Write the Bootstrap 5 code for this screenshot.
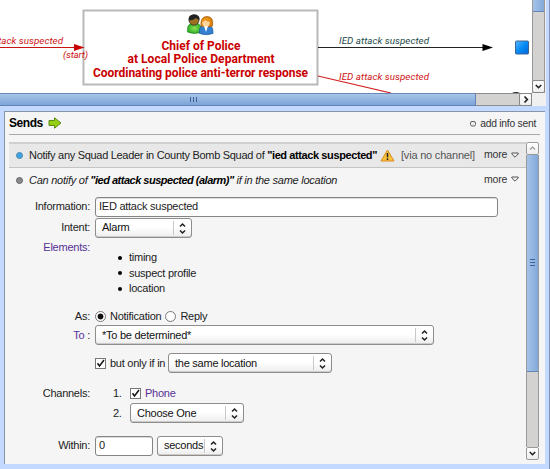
<!DOCTYPE html>
<html lang="en">
<head>
<meta charset="utf-8">
<title>Sends</title>
<link href="https://cdn.jsdelivr.net/npm/bootstrap@5.3.0/dist/css/bootstrap.min.css" rel="stylesheet">
<style>
body{width:550px;height:469px;overflow:hidden;background:#c3d9ff;font:11px/15px "Liberation Sans",Arial,sans-serif;color:#1c1c1c;letter-spacing:-.25px;white-space:nowrap}
.app{width:550px;height:469px;border-right:1px solid #7e93b5}
.flow-pane{height:106px;width:546px;background:#f0f0f0}
.flow-top{height:93px}
.canvas{width:532px;height:93px;background:#fff;letter-spacing:0}
.canvas text{font-family:Roboto,"Liberation Sans",sans-serif}
.vbar{width:13px;background:#d4d2d0;border-left:1px solid #999;border-right:1px solid #999}
.vthumb{background:linear-gradient(90deg,#a5c3e9,#82a8d9);border-bottom:1px solid #6384b4}
.top-thumb{height:12px}
.arrow-btn{width:13px;height:13px;flex:none;background:linear-gradient(#fff,#eee);border:1px solid #888;border-radius:2px}
.down-btn{margin-left:-1px}.right-btn{margin-top:-1px}
.hbar{height:13px;width:532px;background:#d4d2d0;border-top:1px solid #8d8d8d;border-bottom:1px solid #8d8d8d}
.hthumb{width:476px;background:linear-gradient(#a9c5e9,#7da4d7);border-right:1px solid #6384b4;border-top:1px solid #6687b7;border-bottom:1px solid #6384b4;margin:-1px 0;padding-left:190px}
.panel{margin:5px 0 0 4px;width:541px;height:353px;background:#f5f5f5;border-top:1px solid #8795a9;border-left:1px solid #8795a9;padding:0 4px}
.panel-head{height:23px;border-bottom:1px solid #aaa;width:531px}
.sends{font-size:12px;font-weight:700;color:#000;letter-spacing:-.45px}
.list-area{margin-top:7px;width:530px;height:318px}
.sheet{width:517px}
.line-one{height:26px;background:#e8e8e8;border-top:2px solid #d0d0d0;border-bottom:1px solid #c4c4c4;padding-left:7px}
.line-two{height:28px;padding:0 0 4px 7px}
.after-dot{margin-left:6px}
.notify{letter-spacing:-.3px}
.notify b{letter-spacing:-.4px;color:#000}
.can b{letter-spacing:-.5px;color:#000}
.warn{margin-left:3px}
.via{margin-left:6px;color:#555;letter-spacing:-.2px}
.dot{width:7px;height:7px;border-radius:50%;flex:none}
.dot-b{background:#38a5e5;border:1px solid #5586a8}
.dot-g{background:#88888e;border:1px solid #666}
.more{font-size:10.5px;margin-right:7px;padding-bottom:2px;color:#333}
.sm{font-size:10.300px;color:#333}
.lbl{width:81px;text-align:right;margin-right:5px;flex:none}
.vio{color:#563196}
.el{padding-top:2px}
.r21{height:21px}.r20{height:20px}.r18{height:18px}
.sel{height:20px;border:1px solid #8f8c89;border-radius:3px;background:linear-gradient(#fff 45%,#ededed);box-shadow:inset 0 -1px #ccc;padding-left:6px;color:#111}
.sel svg{border-left:1px solid #c8c8c8;flex:none}
.txt{height:20px;border:1px solid #858585;border-radius:3px;background:#fff;padding-left:3px;box-shadow:inset 0 1px #ddd}
.w97{width:97px}.w339{width:339px}.w164{width:164px}.w114{width:114px}.w66{width:66px}.w403{width:403px}.w58{width:58px}
.items{padding-top:12px;margin-left:23px;height:58px}
.items li{height:15.5px;list-style:none;display:flex;align-items:center;gap:7px}
.items li::before{content:"";width:4px;height:4px;border-radius:50%;background:#000}
.cb{width:11px;height:11px;border:1px solid #777;background:#fff;flex:none}
.rd{width:11px;height:11px;border:1px solid #777;border-radius:50%;background:#fff;flex:none}
.rd-on{background:radial-gradient(circle,#111 0 2.6px,#fff 3.3px)}
.as-row{margin-top:11px}.only-row{margin-top:8px}.ch-row{margin-top:10px}.in-row{margin-top:12px}
.only{width:58px;margin-left:4px}
.num{width:9px;margin:0 8px 0 18px}
.choose-row{padding-left:86px}
.rail{width:13px;height:318px}
.rail .arrow-btn{border-color:#999}
.rail .vbar .vthumb{height:217px}
</style>
</head>
<body>
<svg class="d-none">
<symbol id="spin" viewBox="0 0 17 14"><path d="M6 5.6 8.500 3 11 5.600M6 9.400 8.500 12 11 9.400" fill="none" stroke="#222" stroke-width="1.5"/></symbol>
<symbol id="tri" viewBox="0 0 8 6"><path d="M.8 1h6.400v1L4 5.200.8 2z" fill="#eee" stroke="#555"/></symbol>
<symbol id="tick" viewBox="0 0 9 9"><path d="M1.500 4.200 3.500 7 8 1" fill="none" stroke="#111" stroke-width="1.500"/></symbol>
</svg>
<div class="app">
<section class="flow-pane">
<div class="flow-top d-flex">
<svg class="canvas" viewBox="0 0 532 93">
<defs>
<linearGradient id="node" x2="1" y2="1"><stop stop-color="#55b9ff"/><stop offset=".5" stop-color="#078bf5"/><stop offset="1" stop-color="#0064d8"/></linearGradient>
<radialGradient id="gr"><stop stop-color="#8ae454"/><stop offset="1" stop-color="#2fae28"/></radialGradient>
</defs>
<rect x="83.500" y="10.500" width="234" height="74" fill="#fff" stroke="#b9b9b9" stroke-width="2"/>
<g stroke-width="1.200">
<path d="M0 47.500H76" stroke="#c91414"/><path d="M74 44l10.500 3.500L74 51z" fill="#c90000"/>
<path d="M318 47.500H484" stroke="#222"/><path d="M482.500 44l10.500 3.500-10.500 3.500z" fill="#000"/>
<path d="M318 76 391 93" stroke="#d42020"/>
</g>
<rect x="515.500" y="41" width="13" height="13" rx="1" fill="url(#node)" stroke="#3c6591"/>
<path d="M512 93q4-2 8 0z" fill="#222"/>
<g stroke-width=".7">
<path d="M187.500 32q-1-8 5-9h4q5 1 5 9-7 3-14 0z" fill="url(#gr)" stroke="#25851f"/>
<ellipse cx="194" cy="20" rx="5" ry="5.200" fill="#9c7222" stroke="#222"/>
<path d="M188.800 20.500q-1-6 5.200-6t5.500 5.500q-2-.5-3.500-2-3 2.500-7.200 2.500z" fill="#222"/>
<path d="M199.500 33.500q-1-7 4-8.500h5q5 1 4.500 8.500-7 2.500-13.500 0z" fill="#347fd0" stroke="#235b9a"/>
<path d="M201 26q-1-9.500 6-9.500t5.500 9.500q-6 2-11.500 0z" fill="#d9800c" stroke="#a45d0a"/>
<ellipse cx="206" cy="22.500" rx="3.800" ry="4.300" fill="#ffd39a"/>
<path d="M201.500 22q1-4 5-4 4 1 4.500 4-4 0-6-2-1 2-3.500 2z" fill="#e79314"/>
<path d="M204 26l2 6 2-6z" fill="#fff"/>
</g>
<g fill="#c90000" font-size="12" font-weight="700">
<text x="161.500" y="49.500" textLength="79">Chief of Police</text>
<text x="127.500" y="63" textLength="147">at Local Police Department</text>
<text x="93" y="76.500" textLength="215">Coordinating police anti-terror response</text>
</g>
<g font-size="9.800" font-style="italic" fill="#d01414">
<text x="-27" y="44.300" textLength="90">IED attack suspected</text>
<text x="63" y="58.300" textLength="25">(start)</text>
<text x="339" y="44.300" textLength="90" fill="#254a48">IED attack suspected</text>
<text x="339" y="80.300" textLength="90">IED attack suspected</text>
</g>
</svg>
<div class="vbar d-flex flex-column justify-content-between"><div class="vthumb top-thumb"></div>
<svg class="arrow-btn down-btn" viewBox="0 0 11 11"><path d="M2.800 4 5.500 6.700 8.200 4" fill="none" stroke="#222" stroke-width="1.600"/></svg></div>
</div>
<div class="hbar d-flex justify-content-between">
<div class="hthumb d-flex align-items-center"><svg width="8" height="5"><path d="M.5 0v5M3.500 0v5M6.500 0v5" stroke="#3f619b"/></svg></div>
<svg class="arrow-btn right-btn" viewBox="0 0 11 11"><path d="M4.500 2.500 7.300 5.500 4.500 8.500" fill="none" stroke="#222" stroke-width="1.700"/></svg>
</div>
</section>
<section class="panel">
<header class="panel-head d-flex align-items-center justify-content-between">
<div class="d-flex align-items-center gap-1"><span class="sends">Sends</span>
<svg width="15" height="12" viewBox="-1 0 15 12"><path d="M1 3.500h5.500V.8L13 6 6.500 11.200V8.500H1z" fill="#94cf14" stroke="#5a8c14"/></svg></div>
<div class="d-flex align-items-center sm pe-1"><svg width="6" height="7" class="me-1"><rect x=".5" y="1.500" width="5" height="4.500" rx="1.500" fill="#eee" stroke="#666"/></svg><span>add info sent</span></div>
</header>
<div class="list-area d-flex">
<div class="sheet">
<div class="line-one d-flex align-items-center">
<i class="dot dot-b"></i><span class="after-dot notify">Notify any Squad Leader in County Bomb Squad of <b>"ied attack suspected"</b></span>
<svg class="warn flex-shrink-0" width="15" height="13" viewBox="0 0 15 13"><path d="M7.500 1 14 12H1z" fill="#fbc33b" stroke="#d88920" stroke-linejoin="round"/><path d="M7.500 4v4.200M7.500 9.300v1.600" stroke="#222" stroke-width="1.500"/></svg>
<span class="via">[via no channel]</span>
<span class="more ms-auto d-flex align-items-center gap-1"><span>more</span><svg width="8" height="6" class="flex-shrink-0"><use href="#tri"/></svg></span>
</div>
<div class="line-two d-flex align-items-center">
<i class="dot dot-g"></i><span class="after-dot fst-italic can">Can notify of <b>"ied attack suspected (alarm)"</b> if in the same location</span>
<span class="more ms-auto d-flex align-items-center gap-1"><span>more</span><svg width="8" height="6" class="flex-shrink-0"><use href="#tri"/></svg></span>
</div>
<div class="r21 d-flex align-items-center"><span class="lbl">Information:</span><div class="txt w403 d-flex align-items-center">IED attack suspected</div></div>
<div class="r21 d-flex align-items-center"><span class="lbl">Intent:</span><div class="sel w97 d-flex align-items-center justify-content-between">Alarm<svg width="18" height="14"><use href="#spin"/></svg></div></div>
<div class="d-flex"><span class="lbl vio el">Elements:</span><ul class="items mb-0 ps-0"><li>timing</li><li>suspect profile</li><li>location</li></ul></div>
<div class="r18 as-row d-flex align-items-center"><span class="lbl">As:</span><i class="rd rd-on"></i><span class="ms-1 me-1">Notification</span><i class="rd"></i><span class="ms-1">Reply</span></div>
<div class="r20 d-flex align-items-center"><span class="lbl"><span class="vio">To</span> :</span><div class="sel w339 d-flex align-items-center justify-content-between">*To be determined*<svg width="18" height="14"><use href="#spin"/></svg></div></div>
<div class="r20 only-row d-flex align-items-center"><span class="lbl"></span><svg class="cb" viewBox="0 0 9 9"><use href="#tick"/></svg><span class="only">but only if in</span><div class="sel w164 d-flex align-items-center justify-content-between">the same location<svg width="18" height="14"><use href="#spin"/></svg></div></div>
<div class="r20 ch-row d-flex align-items-center"><span class="lbl">Channels:</span><span class="num">1.</span><svg class="cb" viewBox="0 0 9 9"><use href="#tick"/></svg><span class="ms-1 vio">Phone</span></div>
<div class="r20 choose-row d-flex align-items-center"><span class="num">2.</span><div class="sel w114 d-flex align-items-center justify-content-between">Choose One<svg width="18" height="14"><use href="#spin"/></svg></div></div>
<div class="r21 in-row d-flex align-items-center"><span class="lbl">Within:</span><div class="txt w58 d-flex align-items-center">0</div><div class="sel w66 ms-1 d-flex align-items-center justify-content-between">seconds<svg width="18" height="14"><use href="#spin"/></svg></div></div>
</div>
<div class="rail d-flex flex-column">
<svg class="arrow-btn" viewBox="0 0 11 11"><path d="M3 6.500 5.500 4 8 6.500" fill="none" stroke="#999" stroke-width="1.200"/></svg>
<div class="vbar flex-grow-1"><div class="vthumb d-flex align-items-center justify-content-center"><svg width="5" height="8"><path d="M0 .5h5M0 3.500h5M0 6.500h5" stroke="#3f619b"/></svg></div></div>
<svg class="arrow-btn" viewBox="0 0 11 11"><path d="M2.800 4 5.500 6.700 8.200 4" fill="none" stroke="#222" stroke-width="1.600"/></svg>
</div>
</div>
</section>
</div>
</body>
</html>
